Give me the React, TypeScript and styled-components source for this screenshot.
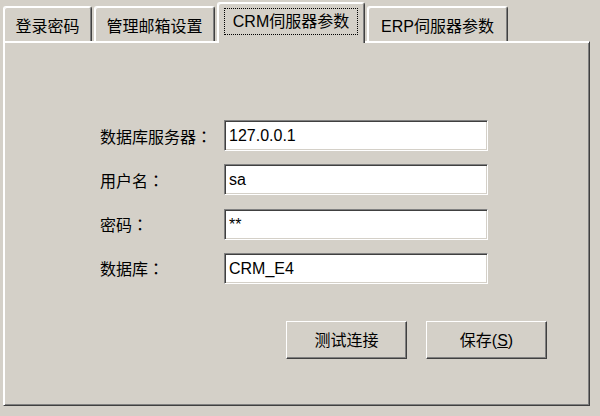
import { Fragment } from 'react';
import styled, { createGlobalStyle } from 'styled-components';

const face = '#D4D0C8';
const shadow = '#808080';
const dark = '#404040';

const GlobalStyle = createGlobalStyle`
  html, body {
    margin: 0;
    padding: 0;
    background: ${face};
  }
  body {
    font-family: "Liberation Sans", "Noto Sans CJK SC", sans-serif;
    font-size: 16px;
    color: #000;
  }
`;

const Window = styled.div`
  width: 600px;
  height: 416px;
  background: ${face};
  padding-left: 3px;
  box-sizing: border-box;
`;

const TabStrip = styled.div`
  display: flex;
  align-items: flex-end;
  height: 41px;
`;

const Tab = styled.div<{ $width: number; $active?: boolean; $gap?: number }>`
  box-sizing: border-box;
  position: relative;
  width: ${({ $width }) => $width}px;
  margin-left: ${({ $gap }) => $gap ?? 0}px;
  height: ${({ $active }) => ($active ? 41 : 35)}px;
  margin-bottom: ${({ $active }) => ($active ? -2 : 0)}px;
  z-index: ${({ $active }) => ($active ? 1 : 0)};
  display: flex;
  justify-content: center;
  align-items: ${({ $active }) => ($active ? 'flex-start' : 'center')};
  padding-top: ${({ $active }) => ($active ? 5 : 1)}px;
  background: ${face};
  border-top: 1px solid #fff;
  border-left: 1px solid #fff;
  border-right: 1px solid ${dark};
  border-radius: 3px 3px 0 0;
  box-shadow: inset 1px 1px 0 #fff, inset -1px 0 0 ${shadow};
  white-space: nowrap;
  cursor: default;
`;

const FocusBox = styled.span`
  border: 1px dotted #000;
  padding: 3px 8px 3px;
  line-height: 19px;
`;

const Panel = styled.div`
  box-sizing: border-box;
  width: 587px;
  height: 365px;
  border-top: 1px solid #fff;
  border-left: 1px solid #fff;
  border-right: 1px solid ${dark};
  border-bottom: 1px solid ${dark};
  box-shadow: inset 1px 1px 0 #fff, inset -1px -1px 0 ${shadow};
  padding: 78px 42px 0 96px;
  display: flex;
  flex-direction: column;
`;

const Form = styled.div`
  display: grid;
  grid-template-columns: 124px 264px;
  grid-auto-rows: 31px;
  row-gap: 13.3px;
  align-items: center;
`;

const Label = styled.label`
  white-space: nowrap;
`;

/* full-width colon sits centred in its cell, as in the original dialog font */
const Colon = styled.span`
  font-family: "Noto Sans CJK TC", sans-serif;
`;

const Field = styled.input`
  box-sizing: border-box;
  width: 264px;
  height: 31px;
  margin: 0;
  padding: 1px 4px 0;
  font: inherit;
  color: #000;
  background: #fff;
  border-top: 1px solid ${shadow};
  border-left: 1px solid ${shadow};
  border-right: 1px solid #fff;
  border-bottom: 1px solid #fff;
  box-shadow: inset 1px 1px 0 ${dark}, inset -1px -1px 0 ${face};
  outline: none;
`;

const ButtonRow = styled.div`
  display: flex;
  justify-content: flex-end;
  gap: 19px;
  margin-top: 37px;
`;

const Button = styled.button`
  box-sizing: border-box;
  width: 121px;
  height: 38px;
  font: inherit;
  color: #000;
  background: ${face};
  border-top: 1px solid #fff;
  border-left: 1px solid #fff;
  border-right: 1px solid ${dark};
  border-bottom: 1px solid ${dark};
  box-shadow: inset -1px -1px 0 ${shadow};
  padding: 0 0 2px;
  cursor: default;
`;

const Mnemonic = styled.span`
  text-decoration: underline;
`;

const tabs = [
  { label: '登录密码', width: 89, gap: 0 },
  { label: '管理邮箱设置', width: 121, gap: 2 },
  { label: 'CRM伺服器参数', width: 148, gap: 2, active: true },
  { label: 'ERP伺服器参数', width: 141, gap: 2 },
];

const fields = [
  { label: '数据库服务器', value: '127.0.0.1' },
  { label: '用户名', value: 'sa' },
  { label: '密码', value: '**' },
  { label: '数据库', value: 'CRM_E4' },
];

export default function App() {
  return (
    <>
      <GlobalStyle />
      <Window>
        <TabStrip>
          {tabs.map((t) => (
            <Tab key={t.label} $width={t.width} $gap={t.gap} $active={t.active}>
              {t.active ? <FocusBox>{t.label}</FocusBox> : t.label}
            </Tab>
          ))}
        </TabStrip>
        <Panel>
          <Form>
            {fields.map((f) => (
              <Fragment key={f.label}>
                <Label>
                  {f.label}
                  <Colon>：</Colon>
                </Label>
                <Field defaultValue={f.value} readOnly />
              </Fragment>
            ))}
          </Form>
          <ButtonRow>
            <Button>测试连接</Button>
            <Button>
              保存(<Mnemonic>S</Mnemonic>)
            </Button>
          </ButtonRow>
        </Panel>
      </Window>
    </>
  );
}
